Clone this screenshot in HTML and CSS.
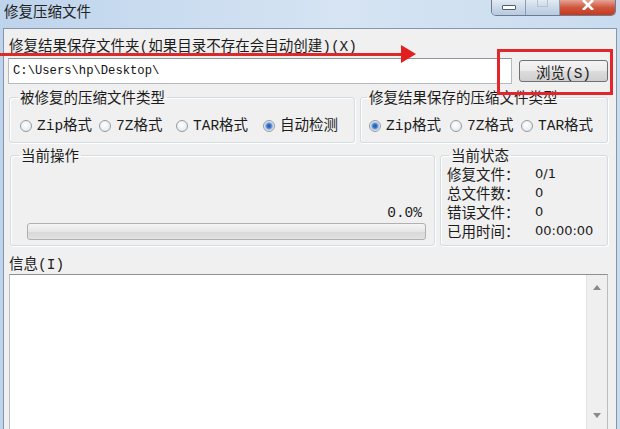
FILE: index.html
```html
<!DOCTYPE html>
<html lang="zh-CN">
<head>
    <meta charset="UTF-8">
    <title>修复压缩文件</title>
    <link rel="stylesheet" href="styles.css">
</head>
<body>
    <div class="window">
        <div class="titlebar">
            <span class="title">修复压缩文件</span>
            <div class="caption">
                <span class="cap-btn cap-min"><i></i></span>
                <span class="cap-btn cap-max"><i></i></span>
                <span class="cap-btn cap-close">
                    <svg width="14" height="10" viewBox="0 0 14 10"><path d="M2 0 L12 10 M12 0 L2 10" stroke="#fff" stroke-width="2.6" fill="none"/></svg>
                </span>
            </div>
        </div>
        <div class="client">
            <div class="path-label">修复结果保存文件夹(如果目录不存在会自动创建)(X)</div>
            <div class="path-row">
                <input class="path-input" type="text" value="C:\Users\hp\Desktop\">
                <button class="btn">浏览(S)</button>
            </div>

            <div class="group-row top-row">
                <fieldset class="group group-src">
                    <legend>被修复的压缩文件类型</legend>
                    <div class="radios radios-src">
                        <label class="radio"><span class="dot"></span>Zip格式</label>
                        <label class="radio"><span class="dot"></span>7Z格式</label>
                        <label class="radio"><span class="dot"></span>TAR格式</label>
                        <label class="radio"><span class="dot checked"></span>自动检测</label>
                    </div>
                </fieldset>
                <fieldset class="group group-dst">
                    <legend>修复结果保存的压缩文件类型</legend>
                    <div class="radios radios-dst">
                        <label class="radio"><span class="dot checked"></span>Zip格式</label>
                        <label class="radio"><span class="dot"></span>7Z格式</label>
                        <label class="radio"><span class="dot"></span>TAR格式</label>
                    </div>
                </fieldset>
            </div>

            <div class="group-row bottom-row">
                <fieldset class="group group-op">
                    <legend>当前操作</legend>
                    <div class="op-body">
                        <div class="percent">0.0%</div>
                        <div class="bar"></div>
                    </div>
                </fieldset>
                <fieldset class="group group-state">
                    <legend>当前状态</legend>
                    <div class="stats">
                        <span class="stat-name">修复文件：</span><span class="stat-val">0/1</span>
                        <span class="stat-name">总文件数：</span><span class="stat-val">0</span>
                        <span class="stat-name">错误文件：</span><span class="stat-val">0</span>
                        <span class="stat-name">已用时间：</span><span class="stat-val">00:00:00</span>
                    </div>
                </fieldset>
            </div>

            <div class="info-label">信息(I)</div>
            <div class="info-box">
                <div class="info-text"></div>
                <div class="scrollbar">
                    <svg width="8" height="5" viewBox="0 0 8 5"><path d="M0 5 L4 0 L8 5 Z" fill="#8a8a8a"/></svg>
                    <svg width="8" height="5" viewBox="0 0 8 5"><path d="M0 0 L4 5 L8 0 Z" fill="#8a8a8a"/></svg>
                </div>
            </div>
        </div>

        <!-- пометки поверх скриншота -->
        <div class="annot-line"></div>
        <div class="annot-arrow"></div>
        <div class="annot-box"></div>
    </div>
</body>
</html>
```

FILE: styles.css
```css
body {
    margin: 0;
    width: 620px;
    height: 429px;
    overflow: hidden;
    font-family: "Liberation Mono", "Noto Sans CJK SC", monospace;
    font-size: 14.5px;
    color: #1c1c1c;
}
.window {
    position: relative;
    height: 429px;
    padding: 0 3px;
    box-sizing: border-box;
    background: linear-gradient(to right, #bed4ec, #d6e4f3 55%, #c9dcef);
}
.titlebar {
    height: 28px;
    display: flex;
    justify-content: space-between;
    align-items: flex-start;
}
.title {
    font-family: "Noto Sans CJK SC", sans-serif;
    line-height: 16px;
    padding-top: 3px;
    margin-left: 1px;
    color: #222;
}
.caption {
    display: flex;
    margin-right: 1px;
    height: 16px;
    border: 1px solid #6a7c93;
    border-top: none;
    border-radius: 0 0 5px 5px;
    overflow: hidden;
    box-sizing: border-box;
}
.cap-btn {
    display: flex;
    justify-content: center;
    height: 100%;
    background: linear-gradient(#e3ebf4, #cbd8e7 50%, #b9cade);
}
.cap-min {
    width: 33px;
    border-right: 1px solid #8d9db0;
}
.cap-min i {
    width: 12px;
    height: 3px;
    margin-top: 5px;
    background: #fff;
    border: 1px solid #4d5e72;
    border-radius: 1px;
}
.cap-max {
    width: 33px;
    border-right: 1px solid #8d9db0;
}
.cap-max i {
    width: 9px;
    height: 6px;
    border: 1px solid #b6c2d0;
    border-top: none;
}
.cap-close {
    width: 55px;
    background: linear-gradient(#e6a496, #d0563d 50%, #c4391e);
}
.client {
    height: 401px;
    box-sizing: border-box;
    padding: 10px 8px 0 4px;
    background: #f0f0f0;
    border: 1px solid #8596aa;
    border-bottom: none;
}
.path-label {
    margin-left: 1px;
    line-height: 16px;
}
.path-row {
    display: flex;
    align-items: center;
    margin-top: 3px;
    height: 26px;
}
.path-input {
    width: 504px;
    height: 26px;
    box-sizing: border-box;
    margin: 0;
    padding: 0 4px;
    border: 1px solid #b5b9c0;
    border-top-color: #8e949c;
    background: #fff;
    font-family: "Liberation Mono", monospace;
    font-size: 12.2px;
    color: #111;
}
.btn {
    margin-left: 7px;
    width: 89px;
    height: 22px;
    padding: 0;
    border: 1px solid #707070;
    border-radius: 3px;
    background: linear-gradient(#f4f4f4, #ebebeb 48%, #dcdcdc 52%, #cfcfcf);
    font-family: "Liberation Mono", "Noto Sans CJK SC", monospace;
    font-size: 14.5px;
    color: #222;
}
.group-row {
    display: flex;
    gap: 5px;
}
.top-row {
    margin-top: 5px;
    height: 54px;
}
.bottom-row {
    margin-top: 4px;
    height: 99px;
}
.group {
    margin: 0;
    padding: 0;
    min-width: 0;
    box-sizing: border-box;
    border: 1px solid #d3dce3;
    border-radius: 3px;
    box-shadow: inset 1px 1px 0 #fff, 1px 1px 0 #fff;
}
.group legend {
    margin-left: 8px;
    padding: 0 2px;
    line-height: 16px;
    font-family: "Noto Sans CJK SC", sans-serif;
}
.group-src {
    margin-left: 1px;
    width: 346px;
}
.group-dst {
    width: 248px;
}
.group-dst legend {
    margin-left: 6px;
}
.radios {
    display: grid;
    margin-top: 13px;
    line-height: 16px;
}
.radios-src {
    margin-left: 10px;
    grid-template-columns: 79px 77px 87px auto;
}
.radios-dst {
    margin-left: 8px;
    grid-template-columns: 81px 71px auto;
}
.radio {
    display: flex;
    align-items: center;
    white-space: nowrap;
}
.dot {
    width: 12px;
    height: 12px;
    margin-right: 5px;
    box-sizing: border-box;
    border-radius: 50%;
    border: 1px solid #939ca6;
    background: radial-gradient(circle at 45% 40%, #fff, #dfe2e6);
}
.dot.checked {
    background: radial-gradient(circle, #1f56a8 0, #3c75c6 2px, #9bbbe5 3.5px, #e3e7ec 4.5px);
}
.group-op {
    margin-left: 2px;
    width: 425px;
}
.op-body {
    height: 82px;
    box-sizing: border-box;
    display: flex;
    flex-direction: column;
    justify-content: flex-end;
    padding-bottom: 5px;
}
.percent {
    text-align: right;
    padding-right: 12px;
    margin-bottom: 2px;
    line-height: 16px;
}
.bar {
    height: 17px;
    margin: 0 8px 0 16px;
    box-sizing: border-box;
    border: 1px solid #b0b0b0;
    border-radius: 3px;
    background: linear-gradient(#f5f5f5, #e6e6e6 50%, #d8d8d8 51%, #e2e2e2);
}
.group-state {
    width: 168px;
}
.stats {
    display: grid;
    grid-template-columns: 88px auto;
    padding: 1px 0 0 6px;
    line-height: 19px;
}
.stat-name {
    font-family: "Noto Sans CJK SC", sans-serif;
}
.stat-val {
    font-family: "DejaVu Sans", sans-serif;
    font-size: 13px;
}
.info-label {
    margin-top: 11px;
    margin-left: 1px;
    line-height: 16px;
}
.info-box {
    display: flex;
    margin-top: 1px;
    margin-left: 1px;
    width: 599px;
    height: 156px;
    box-sizing: border-box;
    border: 1px solid #b9bcc1;
    border-top-color: #8f8f8f;
    background: #fff;
}
.info-text {
    flex: 1;
}
.scrollbar {
    width: 21px;
    display: flex;
    flex-direction: column;
    align-items: center;
    justify-content: space-between;
    padding: 10px 0 11px;
    box-sizing: border-box;
    background: #efefef;
    border-left: 1px solid #e4e4e4;
}
.annot-line {
    position: absolute;
    left: 0;
    top: 53px;
    width: 403px;
    height: 3px;
    background: #dc2a2a;
}
.annot-arrow {
    position: absolute;
    left: 401px;
    top: 45px;
    border-left: 15px solid #e11f1f;
    border-top: 9px solid transparent;
    border-bottom: 9px solid transparent;
}
.annot-box {
    position: absolute;
    left: 497px;
    top: 49px;
    width: 116px;
    height: 46px;
    box-sizing: border-box;
    border: 3px solid #e3262b;
}
```
